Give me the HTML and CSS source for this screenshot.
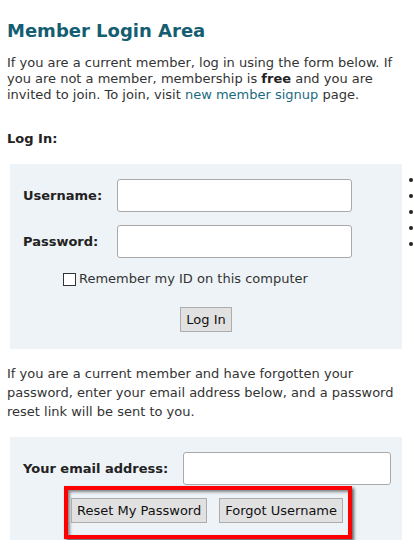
FILE: index.html
```html
<!DOCTYPE html>
<html lang="en">
<head>
    <meta charset="UTF-8">
    <title>Member Login Area</title>
    <link rel="stylesheet" href="styles.css">
</head>
<body>
    <div class="page">
        <h1 class="title">Member Login Area</h1>
        <p class="intro">
            If you are a current member, log in using the form below. If
            you are not a member, membership is <strong>free</strong> and you are
            invited to join. To join, visit <a href="#">new member signup</a> page.
        </p>
        <h4 class="section-label">Log In:</h4>
        <div class="login-row">
            <form class="panel login-panel">
                <div class="field">
                    <label for="username">Username:</label>
                    <input type="text" id="username">
                </div>
                <div class="field">
                    <label for="password">Password:</label>
                    <input type="password" id="password">
                </div>
                <label class="remember"><input type="checkbox"> Remember my ID on this computer</label>
                <div class="actions">
                    <button type="button">Log In</button>
                </div>
            </form>
            <ul class="side-list">
                <li></li>
                <li></li>
                <li></li>
                <li></li>
                <li></li>
            </ul>
        </div>
        <p class="reset-text">
            If you are a current member and have forgotten your
            password, enter your email address below, and a password
            reset link will be sent to you.
        </p>
        <form class="panel reset-panel">
            <div class="field">
                <label for="email">Your email address:</label>
                <input type="text" id="email">
            </div>
            <div class="highlight">
                <button type="button">Reset My Password</button>
                <button type="button">Forgot Username</button>
            </div>
        </form>
    </div>
</body>
</html>
```

FILE: styles.css
```css
body {
    margin: 0;
    overflow: hidden;
    background: #fff;
    font-family: "DejaVu Sans", Verdana, sans-serif;
    font-size: 13px;
    color: #333;
}
.page {
    padding: 0 7px;
}
.title {
    margin: 19px 0 0;
    font-size: 18px;
    line-height: 24px;
    color: #155e72;
}
.intro {
    margin: 12px 0 0;
    line-height: 16px;
}
.intro strong {
    color: #222;
}
.intro a {
    color: #1a6b80;
    text-decoration: none;
}
.section-label {
    margin: 28px 0 0;
    font-size: 13px;
    line-height: 16px;
    color: #222;
}
.login-row {
    display: flex;
    align-items: flex-start;
    margin-top: 17px;
    width: 440px;
}
.panel {
    background: #eef3f7;
    box-sizing: border-box;
    width: 392px;
    margin-left: 3px;
}
.login-panel {
    padding: 15px 13px 17px;
    flex-shrink: 0;
}
.field {
    display: flex;
    align-items: center;
    margin-bottom: 13px;
}
.field label {
    font-weight: bold;
    color: #222;
    width: 94px;
}
.field input {
    width: 235px;
    height: 33px;
    box-sizing: border-box;
    border: 1px solid #a9a9a9;
    border-radius: 3px;
    background: #fff;
}
.remember {
    display: flex;
    align-items: center;
    padding-left: 40px;
    line-height: 16px;
}
.remember input {
    appearance: none;
    -webkit-appearance: none;
    box-sizing: border-box;
    margin: 0 3px 0 0;
    width: 13px;
    height: 13px;
    border: 1px solid #333;
    border-radius: 0;
    background: #fff;
}
.actions {
    text-align: center;
    margin-top: 20px;
}
button {
    font-family: "DejaVu Sans", Verdana, sans-serif;
    font-size: 13px;
    color: #111;
    background: #e1e1e1;
    border: 1px solid #adadad;
    height: 25px;
    padding: 0 5px;
    white-space: nowrap;
}
.side-list {
    margin: 8px 0 0;
    padding-left: 22px;
    line-height: 16px;
    color: #222;
}
.reset-text {
    margin: 15px 0 0;
    line-height: 19px;
}
.reset-panel {
    margin-top: 16px;
    padding: 15px 11px 1px 13px;
}
.reset-panel .field {
    margin-bottom: 1px;
}
.reset-panel .field label {
    width: 160px;
}
.reset-panel .field input {
    width: 208px;
}
.reset-panel button {
    flex: none;
}
.highlight {
    display: flex;
    gap: 12px;
    width: 288px;
    box-sizing: border-box;
    margin-left: 41px;
    padding: 8px 7px 12px 3px;
    border: 4px solid #f00;
    box-shadow: 2px 2px 3px rgba(0, 0, 0, 0.6), inset 2px 2px 3px rgba(0, 0, 0, 0.45);
}
```
